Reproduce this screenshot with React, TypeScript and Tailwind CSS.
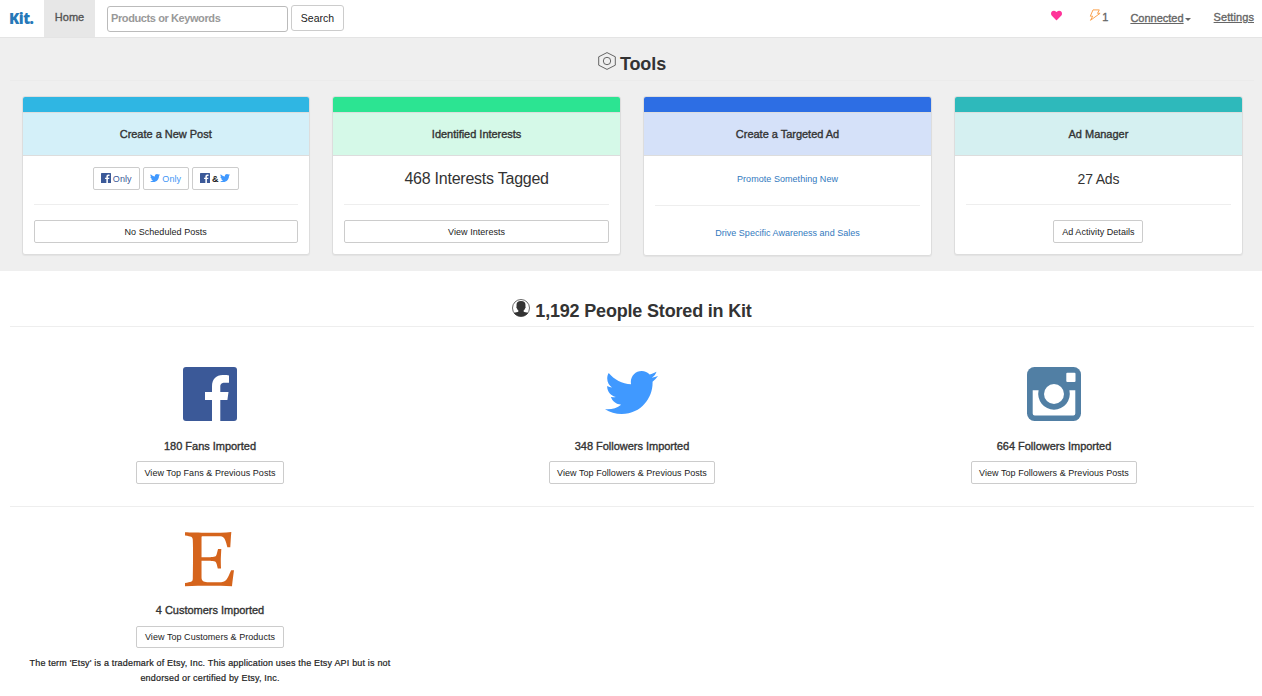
import type { ReactNode } from "react";
import { FaEtsy, FaHeart, FaTwitter } from "react-icons/fa";

const medium = "[-webkit-text-stroke:0.35px_currentColor]";

function FacebookIcon({ className }: { className: string }) {
  return (
    <svg viewBox="0 0 54 54" className={className}>
      <rect width="54" height="54" rx="3" fill="#3b5998" />
      <path
        fill="#fff"
        d="M29 54V33h-7v-8h7v-5.500c0-7.500 4.300-11.500 10.600-11.500 3 0 5.400.2 6.400.4v7.300h-4.300c-3.400 0-4.400 1.600-4.400 4V25h8.200l-1.100 8h-7.100v21z"
      />
    </svg>
  );
}

function InstagramIcon({ className }: { className: string }) {
  return (
    <svg viewBox="0 0 54 54" className={className}>
      <rect width="54" height="54" rx="7.500" fill="#517fa4" />
      <path
        fill="#fff"
        d="M5.700 23.300h5.900a15.800 15.800 0 1 0 30.800 0H48.300V46.500a2 2 0 0 1-2 2H7.700a2 2 0 0 1-2-2z"
      />
      <circle cx="27" cy="27" r="10" fill="#fff" />
      <rect x="39.300" y="5.800" width="9.200" height="9.200" rx="1" fill="#fff" />
    </svg>
  );
}

function HexIcon() {
  return (
    <svg viewBox="0 0 18 18" className="size-[18px]" fill="none" stroke="#555" strokeWidth="0.9">
      <path d="M9 .6l8.300 4.200v8.400L9 17.400.7 13.200V4.800z" />
      <circle cx="9" cy="9" r="3.700" />
    </svg>
  );
}

function PersonIcon() {
  return (
    <svg viewBox="0 0 18 18" className="size-[18px]">
      <circle cx="9" cy="9" r="8.500" fill="none" stroke="#444" strokeWidth="0.8" />
      <path
        fill="#333"
        d="M9 2.100c3.100 0 4.500 1.500 4.500 4 0 .6-.1 1-.1 1.300.5.2.3 1.600-.4 2-.3 1.100-.9 1.700-1.400 2.100v.9c.7.700 2.800.7 4.600 1.700A8.500 8.500 0 0 1 9 17.500a8.500 8.500 0 0 1-7.200-3.400c1.800-1 3.900-1 4.600-1.700v-.9c-.5-.4-1.100-1-1.400-2.100-.7-.4-.9-1.800-.4-2 0-.3-.1-.7-.1-1.300 0-2.500 1.400-4 4.500-4z"
      />
    </svg>
  );
}

function BoltIcon() {
  return (
    <svg viewBox="0 0 12 12" className="size-3" fill="none" stroke="#fba34f" strokeWidth="1" strokeLinejoin="round">
      <path d="M4 .9h6.300L8.500 4.300h2.600L1.500 11.300 3.700 7.200H1.300z" />
    </svg>
  );
}

function Button({
  className = "",
  color = "text-[#222]",
  height = "h-[23px]",
  children,
}: {
  className?: string;
  color?: string;
  height?: string;
  children: ReactNode;
}) {
  return (
    <button
      className={`flex items-center justify-center rounded-[2px] border border-[#ccc] bg-white pt-[2px] text-[9px] tracking-[0.045px] whitespace-nowrap ${height} ${color} ${className}`}
    >
      {children}
    </button>
  );
}

function Card({ title, bar, head, children }: { title: string; bar: string; head: string; children: ReactNode }) {
  return (
    <section className="min-w-0 flex-1 overflow-hidden rounded-[3px] border border-[#ddd] bg-white shadow-[0_1px_1px_rgba(0,0,0,0.05)]">
      <div className={`h-[15px] ${bar}`} />
      <h3
        className={`flex h-11 items-center justify-center border-y border-[#ddd] text-[11px] tracking-[-0.02px] text-[#333] ${medium} ${head}`}
      >
        {title}
      </h3>
      <div className="flex flex-col items-center px-[11px] pt-[11px] pb-[11px]">{children}</div>
    </section>
  );
}

function Source({
  icon,
  label,
  action,
  button,
  height,
}: {
  icon: ReactNode;
  label: string;
  action: string;
  button: string;
  height?: string;
}) {
  return (
    <div className="flex w-[422px] flex-col items-center">
      <div className="flex h-[54px] items-center justify-center">{icon}</div>
      <h4 className={`mt-[18px] text-[11px] leading-[15px] tracking-[-0.02px] text-[#333] ${medium}`}>{label}</h4>
      <Button className={button} height={height}>
        {action}
      </Button>
    </div>
  );
}

export default function App() {
  return (
    <div className="h-[696px] w-full overflow-hidden bg-white font-['Liberation_Sans',Arial,sans-serif] text-[#333]">
      <nav className="flex h-[38px] border-b border-[#e4e4e4] bg-white">
        <a className="w-[44px] pl-[9px] font-['Open_Sans',sans-serif] text-[15px] leading-[37px] font-extrabold tracking-[-0.500px] text-[#2678b8]">
          Kit.
        </a>
        <a className={`w-[51px] bg-[#e7e7e7] text-center text-[11px] leading-[35px] text-[#555] ${medium}`}>Home</a>
        <input
          placeholder="Products or Keywords"
          className="mt-[6px] ml-3 h-[26px] w-[181px] rounded-[3px] border border-[#bbb] px-[3px] pb-[2px] text-[11px] font-bold tracking-[-0.4px] placeholder:text-[#999]"
        />
        <button className="mt-[5px] ml-[3px] h-[26px] w-[53px] rounded-[3px] border border-[#ccc] pt-px text-[10.500px] text-[#222]">
          Search
        </button>
        <div className="ml-auto flex pr-[8px] text-[11px] leading-[35px] text-[#666]">
          <FaHeart className="mt-[10px] mr-[27px] size-[11px] text-[#ff3399]" />
          <span className="mt-[9px] mr-px">
            <BoltIcon />
          </span>
          <span className={`mr-[22px] ${medium}`}>1</span>
          <span className={`mr-[23px] flex items-center ${medium}`}>
            <span className="underline">Connected</span>
            <svg viewBox="0 0 6 3" className="mt-[2px] ml-[1px] h-[3px] w-[6px]">
              <path d="M0 0h6L3 3z" fill="#666" />
            </svg>
          </span>
          <a className={`tracking-[0.08px] underline ${medium}`}>Settings</a>
        </div>
      </nav>

      <main>
        <section className="h-[233px] bg-[#efefef] pr-2 pl-[10px]">
          <h2 className="flex h-[43px] justify-center gap-1 border-b border-[#ebebeb] pt-[14px] text-[18px] leading-[25px] font-bold tracking-[-0.1px]">
            <HexIcon />
            <span>Tools</span>
          </h2>
          <div className="mt-[15px] flex items-start gap-[22.500px] pr-[11.400px] pl-[11.500px]">
            <Card title="Create a New Post" bar="bg-[#2fb6e3]" head="bg-[#d4f0f9]">
              <div className="flex gap-[3px]">
                <Button className="w-[47px] gap-[2px]" color="text-[#3b5998]">
                  <FacebookIcon className="mb-[3px] size-[10px]" />
                  <span>Only</span>
                </Button>
                <Button className="w-[46px] gap-[2px]" color="text-[#3f96f5]">
                  <FaTwitter className="mb-[3px] size-[10px] text-[#4099ff]" />
                  <span>Only</span>
                </Button>
                <Button className="w-[47px] gap-[2px] font-bold">
                  <FacebookIcon className="mb-[3px] size-[10px]" />
                  <span>&amp;</span>
                  <FaTwitter className="mb-[3px] size-[10px] text-[#4099ff]" />
                </Button>
              </div>
              <hr className="mt-[14px] w-full border-[#eee]" />
              <Button className="mt-[15px] w-full">No Scheduled Posts</Button>
            </Card>
            <Card title="Identified Interests" bar="bg-[#2ce492]" head="bg-[#d5f9e8]">
              <p className="h-[23px] text-[16px] leading-[23px] tracking-[-0.240px]">468 Interests Tagged</p>
              <hr className="mt-[14px] w-full border-[#eee]" />
              <Button className="mt-[15px] w-full">View Interests</Button>
            </Card>
            <Card title="Create a Targeted Ad" bar="bg-[#2d6ee4]" head="bg-[#d5e1f9]">
              <a className="h-[23px] text-[9px] leading-[25px] tracking-[0.045px] text-[#3279be]">
                Promote Something New
              </a>
              <hr className="mt-[15px] w-full border-[#eee]" />
              <a className="mt-[15px] h-[23px] text-[9px] leading-[25px] tracking-[0.02px] text-[#3279be]">
                Drive Specific Awareness and Sales
              </a>
            </Card>
            <Card title="Ad Manager" bar="bg-[#2eb9bb]" head="bg-[#d5f0f1]">
              <p className="h-[23px] text-[14px] leading-[25px] tracking-[-0.2px]">27 Ads</p>
              <hr className="mt-[14px] w-full border-[#eee]" />
              <Button className="mt-[15px] w-[90px]">Ad Activity Details</Button>
            </Card>
          </div>
        </section>

        <section className="pr-2 pl-[10px]">
          <h2 className="flex h-14 justify-center gap-[5px] border-b border-[#eee] pt-[28px] text-[18px] leading-[25px] font-bold tracking-[-0.180px]">
            <PersonIcon />
            <span>1,192 People Stored in Kit</span>
          </h2>
          <div className="mt-10 -ml-[11px] flex w-[1266px]">
            <Source
              icon={<FacebookIcon className="size-[54px]" />}
              label="180 Fans Imported"
              action="View Top Fans & Previous Posts"
              button="mt-[7px] w-[148px]"
            />
            <Source
              icon={<FaTwitter className="mr-px mb-[3px] size-[53px] text-[#4099ff]" />}
              label="348 Followers Imported"
              action="View Top Followers & Previous Posts"
              button="mt-[7px] w-[166px]"
            />
            <Source
              icon={<InstagramIcon className="size-[54px]" />}
              label="664 Followers Imported"
              action="View Top Followers & Previous Posts"
              button="mt-[7px] w-[166px]"
            />
          </div>
          <hr className="mt-[22px] border-[#eee]" />
          <div className="mt-6 -ml-[11px] w-[422px]">
            <Source
              icon={
                <FaEtsy preserveAspectRatio="none" className="mt-[2px] mr-[2px] h-[62px] w-[49px] shrink-0 text-[#d5641c]" />
              }
              label="4 Customers Imported"
              action="View Top Customers & Products"
              button="mt-2 w-[148px]"
              height="h-[22px]"
            />
            <p className="mt-2 text-center text-[9px] leading-[15px] tracking-[0.180px] text-[#222] [-webkit-text-stroke:0.2px_currentColor]">
              The term 'Etsy' is a trademark of Etsy, Inc. This application uses the Etsy API but is not
              <br />
              endorsed or certified by Etsy, Inc.
            </p>
          </div>
        </section>
      </main>
    </div>
  );
}
